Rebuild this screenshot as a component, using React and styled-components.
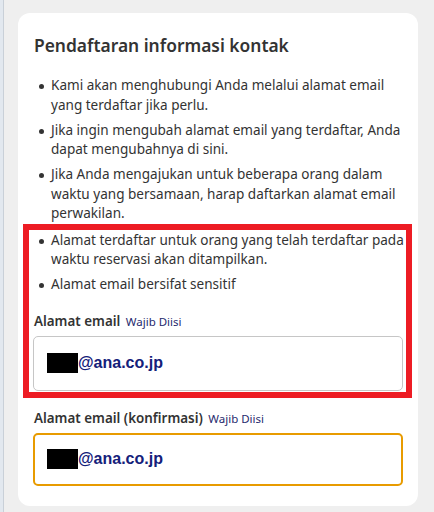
import React from "react";
import styled, { createGlobalStyle } from "styled-components";

const Global = createGlobalStyle`
  html, body { margin: 0; padding: 0; background: #efefef; }
  body { font-family: "Noto Sans", "Open Sans", sans-serif; color: #333; }
  * { box-sizing: border-box; }
`;

const Page = styled.div`
  display: flex;
  min-height: 512px;
`;

const SideStrip = styled.div`
  width: 4px;
  flex: none;
  background: #e2e8ef;
  border-right: 1px solid #c9d0d8;
`;

const Main = styled.div`
  flex: 1;
  padding: 13px 14px 0 14px;
`;

const Card = styled.section`
  background: #fff;
  border-radius: 12px;
  padding: 20px 11px 20px 16px;
  width: 400px;
`;

const Title = styled.h2`
  margin: 0 0 18px 0;
  font-size: 17.4px;
  font-weight: 600;
  line-height: 25px;
  color: #333;
`;

const List = styled.ul`
  margin: 0;
  padding: 0 0 0 17px;
  list-style: none;
`;

const Item = styled.li`
  position: relative;
  font-size: 13.55px;
  line-height: 19.5px;
  color: #333;
  margin-bottom: 5.5px;
  &:last-child {
    margin-bottom: 0;
  }
  &::before {
    content: "";
    position: absolute;
    left: -12px;
    top: 8px;
    width: 5px;
    height: 5px;
    border-radius: 50%;
    background: #333;
  }
`;

const Highlight = styled.div`
  position: relative;
  margin-top: 7px;
  &::after {
    content: "";
    position: absolute;
    top: -7px;
    bottom: -7px;
    left: -11px;
    right: -5px;
    border: 6px solid #ed1c24;
    pointer-events: none;
  }
`;

const Field = styled.div`
  margin-top: ${(p) => p.$top || 0}px;
`;

const Label = styled.div`
  font-size: 13.4px;
  font-weight: 600;
  line-height: 20px;
  color: #333;
  margin-bottom: 4px;
`;

const Required = styled.span`
  font-size: 11.5px;
  font-weight: 400;
  color: #1f2a6e;
  margin-left: 2px;
`;

const InputBox = styled.div`
  height: ${(p) => (p.$focused ? 53 : 55)}px;
  width: 370px;
  margin-left: -1px;
  border: ${(p) => (p.$focused ? "2px solid #e89b00" : "1px solid #c6c6c6")};
  border-radius: 5px;
  display: flex;
  align-items: center;
  padding-left: ${(p) => (p.$focused ? 12 : 13)}px;
  font-family: "Liberation Sans", Arial, sans-serif;
  font-weight: 700;
  font-size: 16px;
  color: #14207a;
`;

const Redacted = styled.span`
  display: inline-block;
  width: 31px;
  height: 20px;
  background: #000;
`;

export default function App() {
  return (
    <>
      <Global />
      <Page>
        <SideStrip />
        <Main>
          <Card>
            <Title>Pendaftaran informasi kontak</Title>
            <List>
              <Item>Kami akan menghubungi Anda melalui alamat email yang terdaftar jika perlu.</Item>
              <Item>Jika ingin mengubah alamat email yang terdaftar, Anda dapat mengubahnya di sini.</Item>
              <Item>Jika Anda mengajukan untuk beberapa orang dalam waktu yang bersamaan, harap daftarkan alamat email perwakilan.</Item>
            </List>
            <Highlight>
              <List>
                <Item>Alamat terdaftar untuk orang yang telah terdaftar pada waktu reservasi akan ditampilkan.</Item>
                <Item>Alamat email bersifat sensitif</Item>
              </List>
              <Field $top={16}>
                <Label>
                  Alamat email <Required>Wajib Diisi</Required>
                </Label>
                <InputBox>
                  <Redacted />
                  @ana.co.jp
                </InputBox>
              </Field>
            </Highlight>
            <Field $top={17}>
              <Label>
                Alamat email (konfirmasi) <Required>Wajib Diisi</Required>
              </Label>
              <InputBox $focused>
                <Redacted />
                @ana.co.jp
              </InputBox>
            </Field>
          </Card>
        </Main>
      </Page>
    </>
  );
}
